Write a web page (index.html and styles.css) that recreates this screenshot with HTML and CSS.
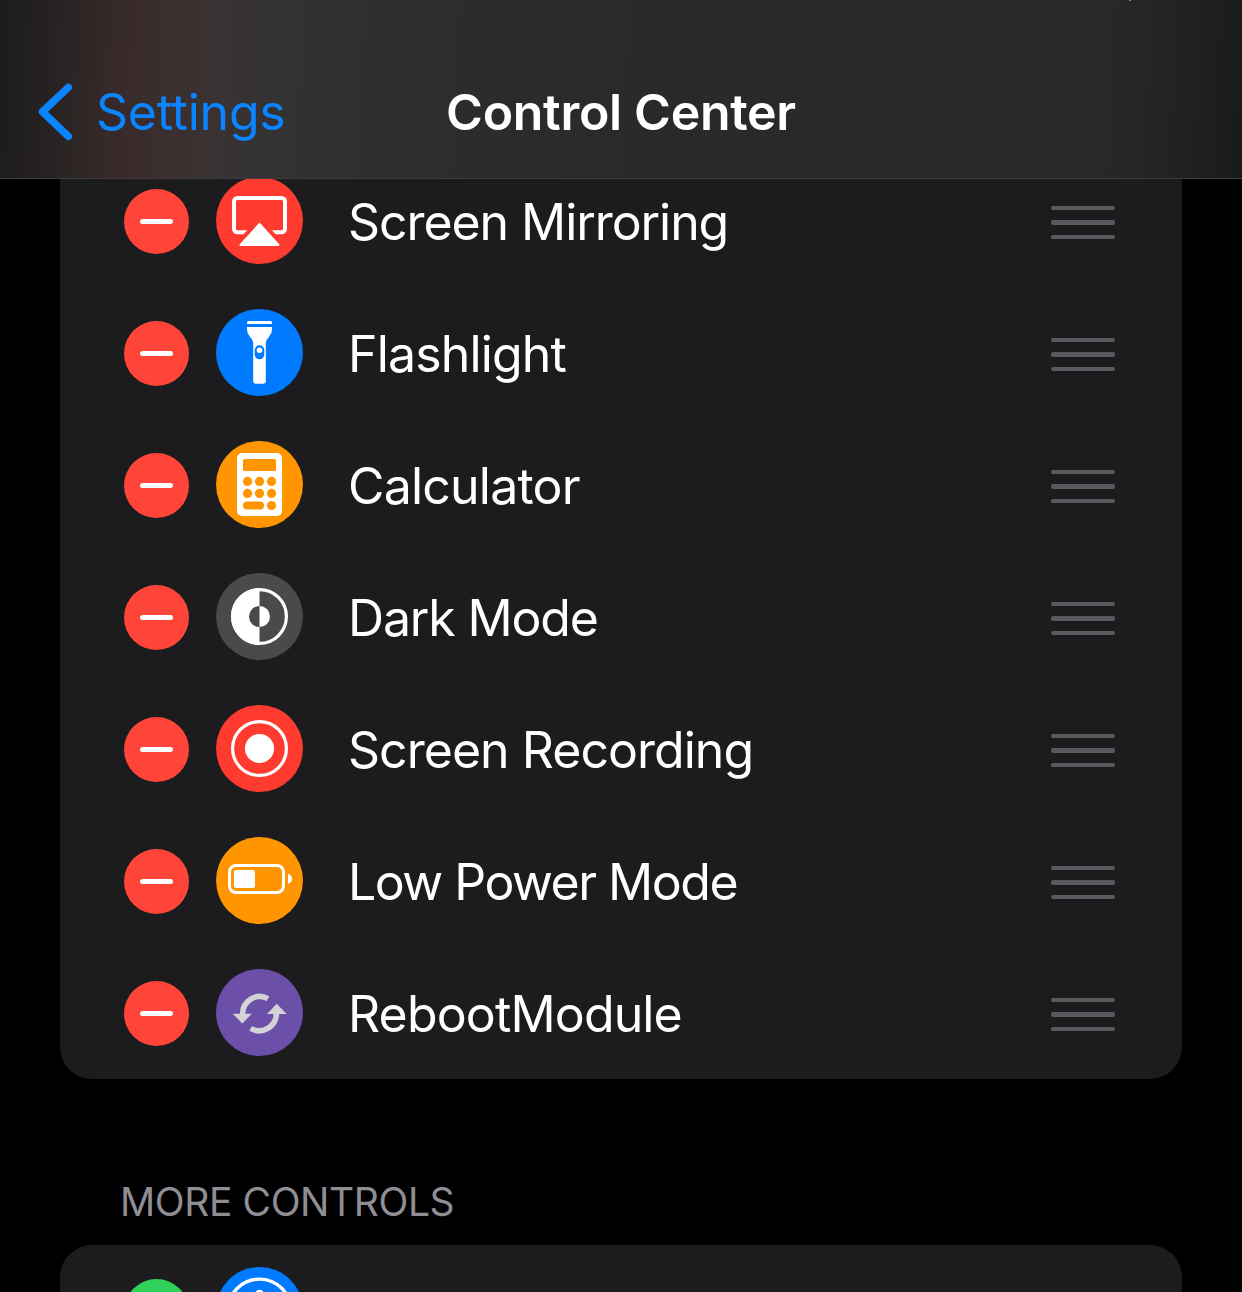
FILE: index.html
```html
<!DOCTYPE html>
<html lang="en">
<head>
<meta charset="utf-8">
<title>Control Center</title>
<link rel="stylesheet" href="styles.css">
</head>
<body>
<header class="navbar">
  <a class="back">
    <svg class="chevron" width="40" height="64" viewBox="0 0 40 64"><path d="M32.3 7.4 6.5 31.8 32.3 56.4"/></svg>
    <span class="back-label">Settings</span>
  </a>
  <h1 class="title">Control Center</h1>
</header>
<main>
  <ul class="card included">
    <li class="row">
      <span class="toggle remove"></span>
      <svg class="icon" viewBox="0 0 87 87"><circle cx="43.5" cy="43.5" r="43.5" fill="#ff3b30"/><rect x="18" y="21" width="51" height="34.3" rx="3.5" fill="none" stroke="#fff" stroke-width="4"/><path d="M43.5 47 24.5 68H62.5Z" fill="#ff3b30" stroke="#ff3b30" stroke-width="10"/><path d="M43.5 47 24.5 68H62.5Z" fill="#fff" stroke="#fff" stroke-width="2" stroke-linejoin="round"/></svg>
      <span class="label mirroring">Screen Mirroring</span>
      <span class="handle"><i></i><i></i><i></i></span>
    </li>
    <li class="row">
      <span class="toggle remove"></span>
      <svg class="icon" viewBox="0 0 87 87"><circle cx="43.5" cy="43.5" r="43.5" fill="#007aff"/><path d="M31 15v-1.5Q31 12 32.5 12h22Q56 12 56 13.5V15Z" fill="#fff"/><path d="M31 18H56V20.5Q56 24 53.5 27L51 30.5Q49.800 32 49.800 34V72Q49.800 74.700 47 74.700H40Q37.200 74.700 37.200 72V34Q37.200 32 36 30.5L33.5 27Q31 24 31 20.5Z" fill="#fff"/><rect x="38.700" y="36.300" width="9.600" height="14" rx="4.800" fill="#007aff"/><circle cx="43.5" cy="41.300" r="2.800" fill="#fff"/></svg>
      <span class="label flashlight">Flashlight</span>
      <span class="handle"><i></i><i></i><i></i></span>
    </li>
    <li class="row">
      <span class="toggle remove"></span>
      <svg class="icon" viewBox="0 0 87 87"><circle cx="43.5" cy="43.5" r="43.5" fill="#ff9500"/><rect x="21" y="12" width="45" height="63" rx="5" fill="#fff"/><g fill="#ff9500"><rect x="27" y="18" width="33" height="12" rx="1.5"/><circle cx="31.5" cy="40.400" r="4.600"/><circle cx="43.5" cy="40.400" r="4.600"/><circle cx="55.5" cy="40.400" r="4.600"/><circle cx="31.5" cy="52.400" r="4.600"/><circle cx="43.5" cy="52.400" r="4.600"/><circle cx="55.5" cy="52.400" r="4.600"/><rect x="27" y="60.5" width="21" height="8" rx="4"/><circle cx="55.5" cy="64.5" r="4.600"/></g></svg>
      <span class="label calculator">Calculator</span>
      <span class="handle"><i></i><i></i><i></i></span>
    </li>
    <li class="row">
      <span class="toggle remove"></span>
      <svg class="icon" viewBox="0 0 87 87"><circle cx="43.5" cy="43.5" r="43.5" fill="#4a4a4a"/><circle cx="43.5" cy="43.5" r="26.900" fill="none" stroke="#fff" stroke-width="3.200"/><path d="M43.5 15a28.5 28.5 0 0 0 0 57V54a10.5 10.5 0 0 1 0-21Z" fill="#fff"/><path d="M43.5 33a10.5 10.5 0 0 1 0 21Z" fill="#fff"/></svg>
      <span class="label darkmode">Dark Mode</span>
      <span class="handle"><i></i><i></i><i></i></span>
    </li>
    <li class="row">
      <span class="toggle remove"></span>
      <svg class="icon" viewBox="0 0 87 87"><circle cx="43.5" cy="43.5" r="43.5" fill="#ff3b30"/><circle cx="43.5" cy="43.5" r="26.900" fill="none" stroke="#fff" stroke-width="3.200"/><circle cx="43.5" cy="43.5" r="14.600" fill="#fff"/></svg>
      <span class="label recording">Screen Recording</span>
      <span class="handle"><i></i><i></i><i></i></span>
    </li>
    <li class="row">
      <span class="toggle remove"></span>
      <svg class="icon" viewBox="0 0 87 87"><circle cx="43.5" cy="43.5" r="43.5" fill="#ff9500"/><rect x="13.5" y="28.5" width="54" height="27" rx="6.5" fill="none" stroke="#fff" stroke-width="3"/><rect x="18" y="33" width="21" height="18" rx="2" fill="#fff"/><path d="M72 36.700Q76 38 76 41.800T72 47Z" fill="#fff"/></svg>
      <span class="label lowpower">Low Power Mode</span>
      <span class="handle"><i></i><i></i><i></i></span>
    </li>
    <li class="row">
      <span class="toggle remove"></span>
      <svg class="icon" viewBox="0 0 87 87"><circle cx="43.5" cy="43.5" r="43.5" fill="#6b4fa8"/><g fill="none" stroke="#d3d3d5" stroke-width="5.600"><path d="M52 29.600A17.200 17.200 0 0 0 26.700 46"/><path d="M34.600 59.400A17.200 17.200 0 0 0 60.300 43.5"/></g><path d="M16.700 44.800H35.700L26.300 54.5ZM51 45H70.700L60.700 34.700Z" fill="#d3d3d5"/></svg>
      <span class="label reboot">RebootModule</span>
      <span class="handle"><i></i><i></i><i></i></span>
    </li>
  </ul>
  <h2 class="section-title">MORE CONTROLS</h2>
  <ul class="card more">
    <li class="row">
      <span class="toggle add"></span>
      <svg class="icon" viewBox="0 0 87 87"><circle cx="43.5" cy="43.5" r="43.5" fill="#007aff"/><circle cx="43.5" cy="43.5" r="31.400" fill="none" stroke="#fff" stroke-width="3.400"/><circle cx="43.5" cy="27.600" r="4.800" fill="#fff"/></svg>
    </li>
  </ul>
</main>
</body>
</html>
```
FILE: styles.css
```css
* { box-sizing: border-box; }

body {
  margin: 0;
  height: 1292px;
  overflow: hidden;
  background: #000;
  color: #fff;
  font-family: Inter, "Liberation Sans", sans-serif;
  font-size: 50px;
}

.navbar {
  position: relative;
  z-index: 1;
  display: grid;
  grid-template-columns: 1fr auto 1fr;
  align-items: center;
  height: 179px;
  padding: 45px 36px 0;
  border-bottom: 1px solid #3d3d3f;
  background:
    linear-gradient(#858585, #858585) 1129px 0 / 2px 1px no-repeat,
    linear-gradient(93deg, #1c1b1b 0, #221f1f 30px, #2b2424 70px, #382a2a 125px, #3b2e2e 170px, #3a3232 215px, #343333 270px, #303031 330px, #2d2d2e 420px, #2a2a2b 600px, #29292b 780px, #29292b 1090px, #252525 1150px, #202020 1200px, #1a1a1b 1247px);
}

.back {
  display: flex;
  align-items: center;
  color: #0a84ff;
}

.chevron {
  flex: none;
  fill: none;
  stroke: #0a84ff;
  stroke-width: 7.5;
  stroke-linecap: round;
  stroke-linejoin: round;
}

.back-label {
  margin-left: 20px;
  letter-spacing: -0.25px;
}

.title {
  margin: 0;
  font-size: 50px;
  font-weight: 600;
  letter-spacing: -0.3px;
}

.card {
  margin: 0 60px;
  padding: 0;
  list-style: none;
  background: #1c1c1e;
}

.included {
  margin-top: -24px;
  border-radius: 0 0 32px 32px;
}

/* Only the top of the next group is in view. */
.more {
  height: 47px;
  overflow: hidden;
  border-radius: 32px 32px 0 0;
}

.row {
  display: flex;
  align-items: center;
  height: 132px;
  padding: 0 67px 0 64px;
}

.toggle {
  display: grid;
  place-items: center;
  width: 65px;
  height: 65px;
  margin: 1px 27px 0 0;
  border-radius: 50%;
}

.toggle::before {
  content: "";
  width: 33px;
  height: 5px;
  border-radius: 2.5px;
  background: #fff;
}

.remove { background: #ff453a; }
.add { background: #30d158; }

.icon {
  width: 87px;
  height: 87px;
  margin: -1px 45px 0 0;
}

.label {
  margin-top: 2px;
  white-space: nowrap;
}

.mirroring { letter-spacing: -1.07px; }
.flashlight { letter-spacing: -0.85px; }
.calculator { letter-spacing: -0.8px; }
.darkmode { letter-spacing: -1.15px; }
.recording { letter-spacing: -0.97px; }
.lowpower { letter-spacing: -1.5px; }
.reboot { letter-spacing: -0.85px; }

.handle {
  display: grid;
  gap: 10px;
  width: 64px;
  margin: 3px 0 0 auto;
}

.handle i {
  height: 4.3px;
  border-radius: 2px;
  background: #5a5a5e;
}

.section-title {
  display: flex;
  align-items: center;
  height: 166px;
  margin: 0 0 0 120px;
  padding-top: 79px;
  color: #8e8e93;
  font-size: 39px;
  font-weight: 400;
  letter-spacing: -0.4px;
}
```
